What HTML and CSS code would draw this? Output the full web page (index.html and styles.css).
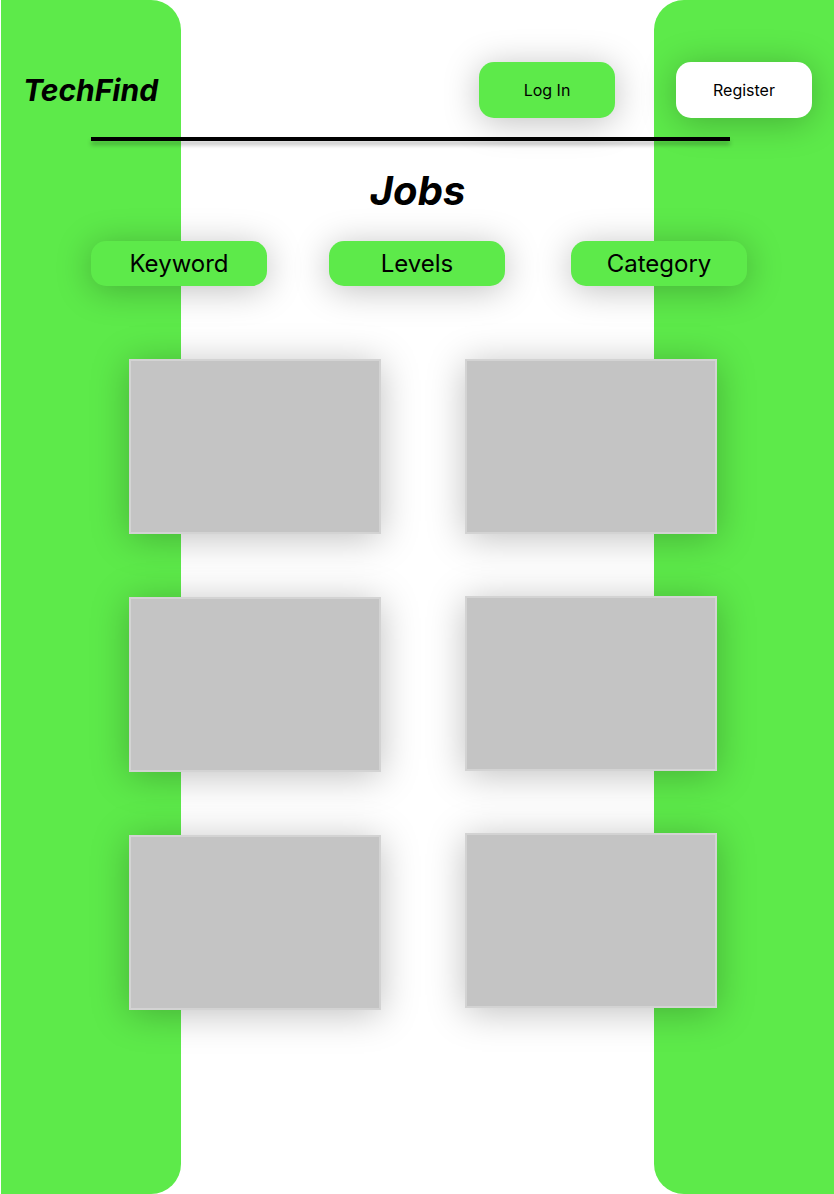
FILE: index.html
```html
<!DOCTYPE html>
<html lang="en">
<head>
<meta charset="utf-8">
<meta name="viewport" content="width=device-width, initial-scale=1">
<title>TechFind - Jobs</title>
<link rel="stylesheet" href="styles.css">
</head>
<body>
<div class="page">
  <div class="panel panel-left"></div>
  <div class="panel panel-right"></div>
  <div class="content">
    <header class="header">
      <a class="logo" href="#">TechFind</a>
      <nav class="account">
        <button class="button" type="button">Log In</button>
        <button class="button button-light" type="button">Register</button>
      </nav>
    </header>
    <hr class="rule">
    <main>
      <h1 class="title">Jobs</h1>
      <div class="filters">
        <button class="button button-filter" type="button">Keyword</button>
        <button class="button button-filter" type="button">Levels</button>
        <button class="button button-filter" type="button">Category</button>
      </div>
      <div class="jobs">
        <div class="column column-first">
          <article class="card"></article>
          <article class="card"></article>
          <article class="card"></article>
        </div>
        <div class="column">
          <article class="card"></article>
          <article class="card"></article>
          <article class="card"></article>
        </div>
      </div>
    </main>
  </div>
</div>
</body>
</html>
```
FILE: styles.css
```css
* {
  box-sizing: border-box;
}

body {
  margin: 0;
  background: #fff;
  color: #000;
  font-family: Inter, "Liberation Sans", sans-serif;
}

/* The content shares the grid row with the two side panels. */
.page {
  display: grid;
  grid-template-columns: 180px 1fr 180px;
  min-height: 100vh;
  padding-left: 1px;
}

.panel {
  grid-row: 1;
  background: #5dea4a;
}

.panel-left {
  grid-column: 1;
  border-radius: 0 30px 30px 0;
}

.panel-right {
  grid-column: 3;
  border-radius: 30px 0 0 30px;
}

.content {
  grid-row: 1;
  grid-column: 1 / -1;
  z-index: 1;
  padding-bottom: 64px;
}

.header {
  display: flex;
  align-items: center;
  justify-content: space-between;
  padding: 62px 22px 19px 22px;
}

.logo {
  color: inherit;
  font-size: 30px;
  font-style: italic;
  font-weight: 700;
  line-height: 36px;
  text-decoration: none;
}

.account {
  display: flex;
  gap: 61px;
}

.button {
  width: 136px;
  height: 56px;
  padding: 0;
  border: 0;
  border-radius: 15px;
  background: #5dea4a;
  box-shadow: 0 4px 35px rgba(0, 0, 0, 0.25);
  color: #000;
  font-family: inherit;
  font-size: 16px;
  cursor: pointer;
}

.button-light {
  background: #fff;
}

.button-filter {
  width: 176px;
  height: 45px;
  font-size: 24px;
}

.rule {
  height: 4px;
  margin: 0 104px 0 90px;
  border: 0;
  background: #000;
  box-shadow: 0 4px 4px rgba(0, 0, 0, 0.25);
}

.title {
  margin: 26px 0;
  font-size: 40px;
  font-style: italic;
  font-weight: 700;
  line-height: 48px;
  text-align: center;
}

.filters {
  display: grid;
  grid-template-columns: 238fr 242fr 176px;
  margin: 0 87px 0 90px;
}

.jobs {
  display: grid;
  grid-template-columns: 1fr 1fr;
  gap: 84px;
  margin: 73px 117px 0 128px;
}

.column {
  display: flex;
  flex-direction: column;
  gap: 62px;
}

.column-first {
  gap: 63px;
}

.card {
  height: 175px;
  border: 2px solid rgba(255, 255, 255, 0.25);
  background: #c4c4c4;
  box-shadow: 0 4px 35px rgba(0, 0, 0, 0.25);
}
```
